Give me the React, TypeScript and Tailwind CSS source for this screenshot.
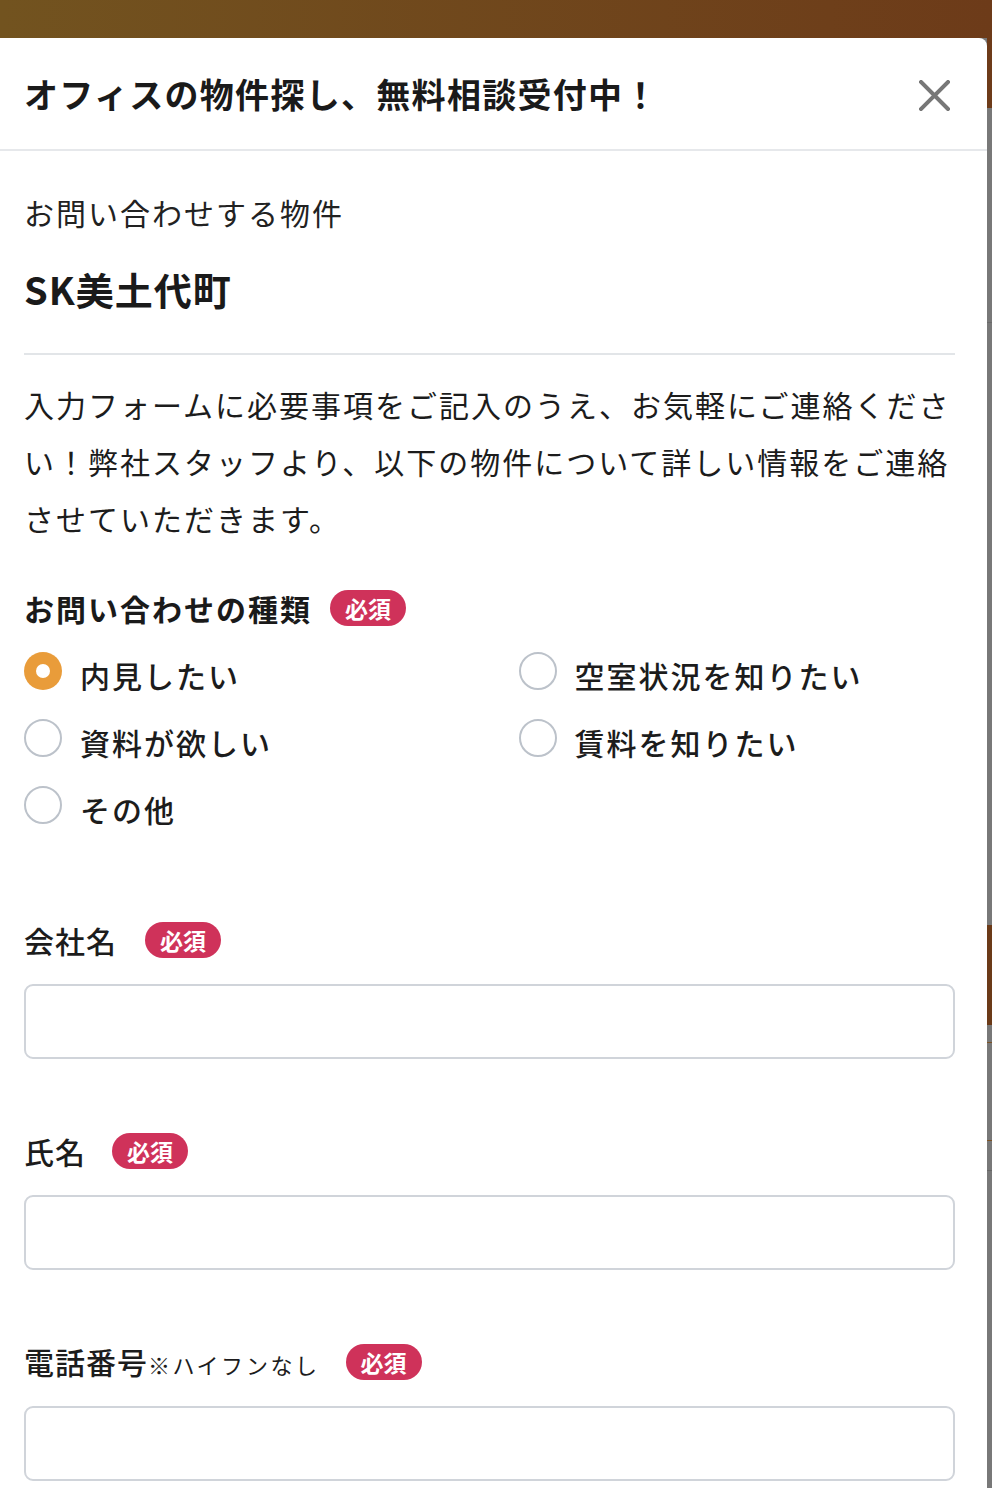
import { useState } from "react";

const options = [
  { id: "visit", label: "内見したい" },
  { id: "vacancy", label: "空室状況を知りたい" },
  { id: "docs", label: "資料が欲しい" },
  { id: "rent", label: "賃料を知りたい" },
  { id: "other", label: "その他" },
];

function Badge() {
  return (
    <span className="inline-flex h-[36px] w-[76px] items-center justify-center rounded-full bg-[#cf325a] text-[23px] font-bold leading-none text-white">
      必須
    </span>
  );
}

function Radio({ checked }: { checked: boolean }) {
  return checked ? (
    <span className="flex size-[38px] shrink-0 items-center justify-center rounded-full bg-[#e99c3a]">
      <span className="size-[14px] rounded-full bg-white" />
    </span>
  ) : (
    <span className="size-[38px] shrink-0 rounded-full border-2 border-[#bcc2ca] bg-white" />
  );
}

function Field({ label, note, gap }: { label: string; note?: string; gap: string }) {
  return (
    <div>
      <div className={`flex h-[40px] items-center ${gap}`}>
        <span className="text-[30px] font-medium leading-[40px] tracking-[1px] text-[#1c1c1c]">
          {label}
          {note && <span className="text-[22px] font-normal tracking-[2.5px]">{note}</span>}
        </span>
        <Badge />
      </div>
      <input
        type="text"
        className="mt-[24px] block h-[75px] w-full rounded-[9px] border-2 border-[#d0d4da] bg-white px-4 text-[28px] outline-none"
      />
    </div>
  );
}

export default function App() {
  const [selected, setSelected] = useState("visit");

  return (
    <div
      className="flex h-[1488px] w-[992px] flex-col overflow-hidden bg-[#787878]"
      style={{ fontFamily: '"Noto Sans CJK JP", "Noto Sans", sans-serif' }}
    >
      <div className="h-[38px] shrink-0 bg-gradient-to-r from-[#72531f] to-[#6d3b19]" />
      <div className="flex flex-1">
        <div className="w-[987px] shrink-0 rounded-tr-lg bg-white">
          <header className="flex h-[113px] items-center justify-between border-b-2 border-[#e6e8eb] pl-6 pr-[37px]">
            <h1 className="text-[34px] font-bold leading-none tracking-[1.3px] text-[#1a1a1a]">
              オフィスの物件探し、無料相談受付中！
            </h1>
            <button aria-label="閉じる" className="mt-1">
              <svg width="31" height="31" viewBox="0 0 31 31">
                <path d="M2 2 L29 29 M29 2 L2 29" stroke="#777" strokeWidth="4" strokeLinecap="square" />
              </svg>
            </button>
          </header>

          <div className="px-6 pt-[41px] pr-[32px]">
            <p className="text-[30px] leading-[40px] tracking-[2px] text-[#222]">お問い合わせする物件</p>
            <p className="mt-[33px] text-[38px] font-bold leading-[48px] tracking-[1px] text-[#1a1a1a]">SK美土代町</p>
            <hr className="mt-[40px] border-t-2 border-[#e2e5e8]" />
            <p className="mt-[21px] text-[30px] leading-[57px] tracking-[2px] text-[#1c1c1c]">
              入力フォームに必要事項をご記入のうえ、お気軽にご連絡ください！弊社スタッフより、以下の物件について詳しい情報をご連絡させていただきます。
            </p>

            <div className="mt-[41px] flex h-[40px] items-center gap-[18px]">
              <span className="text-[30px] font-bold leading-[40px] tracking-[2px] text-[#1a1a1a]">
                お問い合わせの種類
              </span>
              <Badge />
            </div>

            <div className="mt-[24px] grid grid-cols-2 gap-x-[58px] gap-y-[29px]">
              {options.map((o) => (
                <label
                  key={o.id}
                  className="flex h-[38px] cursor-pointer items-center gap-[18px]"
                  onClick={() => setSelected(o.id)}
                >
                  <Radio checked={selected === o.id} />
                  <span className="mt-[8px] text-[30px] font-medium leading-[40px] tracking-[2px] text-[#1c1c1c]">
                    {o.label}
                  </span>
                </label>
              ))}
            </div>

            <div className="mt-[96px]">
              <Field label="会社名" gap="gap-[28px]" />
            </div>
            <div className="mt-[72px]">
              <Field label="氏名" gap="gap-[26px]" />
            </div>
            <div className="mt-[72px]">
              <Field label="電話番号" note="※ハイフンなし" gap="gap-[26px]" />
            </div>
          </div>
        </div>

        <div className="flex flex-1 flex-col">
          <div className="h-[70px] bg-[#6d3b19]" />
          <div className="h-[214px]" />
          <div className="h-px bg-[#6a6a6a]" />
          <div className="h-[602px]" />
          <div className="h-[100px] bg-[#6b3a18]" />
          <div className="h-[17px]" />
          <div className="h-px bg-[#7b5226]" />
          <div className="h-[97px]" />
          <div className="h-px bg-[#7b5226]" />
          <div className="h-[29px]" />
          <div className="h-px bg-[#666]" />
        </div>
      </div>
    </div>
  );
}
